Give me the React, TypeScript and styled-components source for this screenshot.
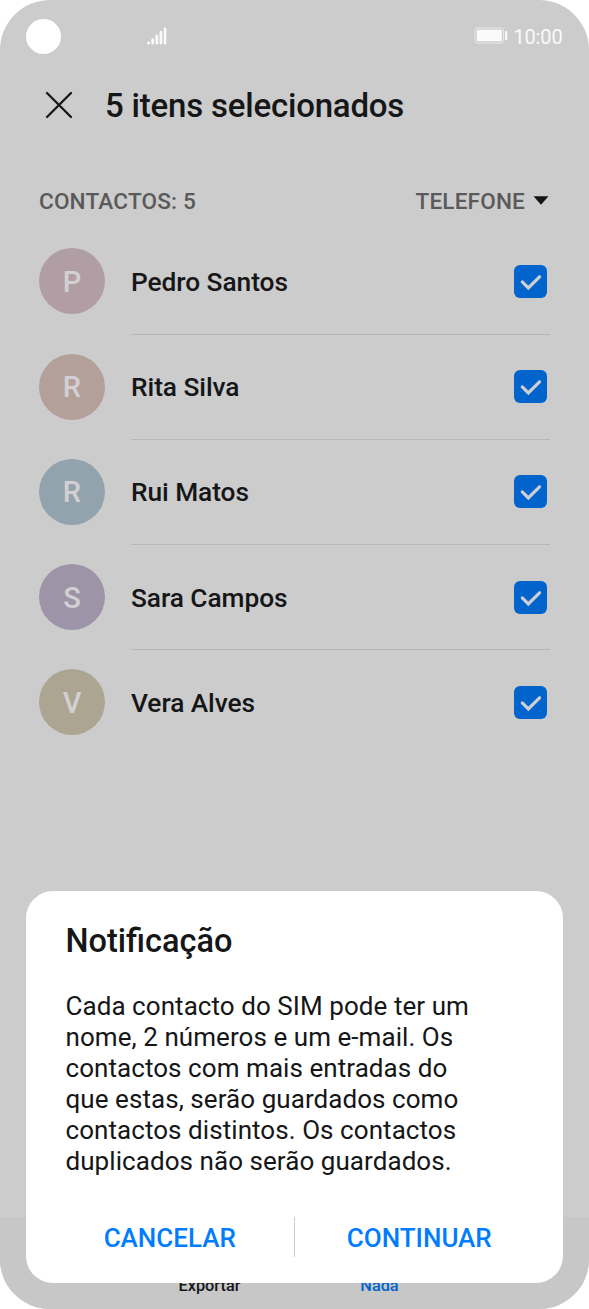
import React from 'react';
import styled, { createGlobalStyle } from 'styled-components';

const GlobalStyle = createGlobalStyle`
  * { box-sizing: border-box; }
  body {
    margin: 0;
    background: #fff;
    font-family: Roboto, "Liberation Sans", sans-serif;
  }
`;

const Phone = styled.div`
  position: relative;
  display: flex;
  flex-direction: column;
  width: 589px;
  height: 1309px;
  overflow: hidden;
  border-radius: 50px;
  background: #ccc;
  color: #151617;
`;

const StatusBar = styled.header`
  display: flex;
  align-items: center;
  height: 73px;
  padding: 0 26.5px 0 26px;
  color: #fafafa;
`;

const Camera = styled.span`
  width: 35px;
  height: 35px;
  border-radius: 50%;
  background: #fff;
`;

const Signal = styled.svg`
  width: 22px;
  height: 20px;
  margin: 0 auto 2px 85px;
`;

const Battery = styled.svg`
  width: 34px;
  height: 17px;
  margin-right: 5px;
  margin-bottom: 2px;
`;

const Clock = styled.time`
  font-size: 20px;
  line-height: 24px;
  letter-spacing: -0.15px;
`;

const TitleBar = styled.div`
  display: flex;
  align-items: center;
  gap: 31px;
  height: 66px;
  padding-left: 44px;
`;

const CloseIcon = styled.svg`
  width: 30px;
  height: 30px;
  margin-bottom: 2px;
`;

const Title = styled.h1`
  margin: 0;
  font-size: 33px;
  font-weight: 500;
  line-height: 40px;
  letter-spacing: -0.2px;
`;

const ListHeader = styled.div`
  display: flex;
  align-items: center;
  justify-content: space-between;
  height: 30px;
  margin-top: 48px;
  padding: 0 40px 0 39px;
  color: #5a5a5a;
  font-size: 22.6px;
  font-weight: 500;
  line-height: 30px;
  letter-spacing: 0.15px;
`;

const Source = styled.span`
  display: flex;
  align-items: center;
  gap: 8px;
`;

const Arrow = styled.svg`
  width: 16px;
  height: 9px;
  margin-bottom: 4px;
`;

const List = styled.ul`
  margin: 12.4px 0 0;
  padding: 0 39px;
  list-style: none;
`;

const Row = styled.li`
  display: flex;
  align-items: center;
  gap: 26px;
  height: 105.2px;
`;

const Avatar = styled.span<{ $color: string }>`
  display: flex;
  align-items: center;
  justify-content: center;
  width: 66px;
  height: 66px;
  margin-bottom: 1px;
  padding-top: 1px;
  border-radius: 50%;
  background: ${(p) => p.$color};
  color: #d2d0d2;
  font-size: 29px;
  font-weight: 500;
`;

const RowBody = styled.div<{ $last: boolean }>`
  display: flex;
  flex: 1;
  align-items: center;
  justify-content: space-between;
  height: 100%;
  padding-right: 3.5px;
  border-bottom: 1px solid ${(p) => (p.$last ? 'transparent' : '#b6b7b8')};
`;

const Name = styled.span`
  padding-top: 1px;
  font-size: 26.3px;
  font-weight: 500;
  line-height: 34px;
  letter-spacing: -0.06px;
`;

const Check = styled.svg`
  width: 33px;
  height: 33px;
`;

const BottomBar = styled.nav`
  display: flex;
  align-items: flex-end;
  height: 92px;
  margin-top: auto;
  padding: 0 124.5px 13px;
  background: #c7c7c7;
`;

const Action = styled.span<{ $active?: boolean }>`
  flex: 1;
  color: ${(p) => (p.$active ? '#0064cc' : '#151617')};
  font-size: 16.3px;
  font-weight: 500;
  line-height: 20px;
  text-align: center;
`;

const Dialog = styled.section`
  position: absolute;
  left: 26px;
  right: 26px;
  bottom: 26px;
  height: 392.5px;
  padding: 30px 39.5px 0;
  border-radius: 27px;
  background: #fff;
`;

const DialogTitle = styled.h2`
  margin: 0;
  font-size: 32.5px;
  font-weight: 500;
  line-height: 40px;
`;

const Message = styled.p`
  margin: 30px 0 0;
  font-size: 26px;
  line-height: 31.1px;
  letter-spacing: 0.06px;
  white-space: nowrap;
`;

const Buttons = styled.div`
  display: flex;
  align-items: center;
  margin: 40px -20px 0;
  height: 40px;
`;

const Button = styled.button`
  flex: 1;
  padding: 2px 0 0;
  border: 0;
  background: none;
  color: #007dff;
  font: 500 26px/40px Roboto, sans-serif;
`;

const Divider = styled.span`
  width: 1px;
  height: 40px;
  background: #ccc;
`;

const contacts = [
  { name: 'Pedro Santos', color: '#b09ea4' },
  { name: 'Rita Silva', color: '#b3a099' },
  { name: 'Rui Matos', color: '#93a3ae' },
  { name: 'Sara Campos', color: '#9d94a8' },
  { name: 'Vera Alves', color: '#aca592' },
];

const message = [
  'Cada contacto do SIM pode ter um',
  'nome, 2 números e um e-mail. Os',
  'contactos com mais entradas do',
  'que estas, serão guardados como',
  'contactos distintos. Os contactos',
  'duplicados não serão guardados.',
];

export default function App() {
  return (
    <>
      <GlobalStyle />
      <Phone>
        <StatusBar>
          <Camera />
          <Signal viewBox="0 0 22 20" stroke="currentColor" strokeWidth="2.7" strokeLinecap="round">
            <path d="M2.6 16.8v.4M6.7 13.6v3.6M10.8 9.9v7.3M14.9 6.2v11M19 2.9v14.3" />
          </Signal>
          <Battery viewBox="0 0 34 17" fill="none">
            <rect x="1" y="1" width="28.5" height="15" rx="2" stroke="#e9e9e9" />
            <rect x="2.8" y="2.8" width="25" height="11.4" rx="0.8" fill="currentColor" />
            <rect x="31" y="4" width="2.3" height="9" rx="1" fill="currentColor" />
          </Battery>
          <Clock>10:00</Clock>
        </StatusBar>
        <TitleBar>
          <CloseIcon viewBox="0 0 30 30" stroke="currentColor" strokeWidth="2.3" strokeLinecap="round">
            <path d="M3 3l24 24M27 3L3 27" />
          </CloseIcon>
          <Title>5 itens selecionados</Title>
        </TitleBar>
        <ListHeader>
          <span>CONTACTOS: 5</span>
          <Source>
            TELEFONE
            <Arrow viewBox="0 0 16 9">
              <path d="M.5 .3h15L8 8.8z" fill="#151617" />
            </Arrow>
          </Source>
        </ListHeader>
        <List>
          {contacts.map(({ name, color }, i) => (
            <Row key={name}>
              <Avatar $color={color}>{name[0]}</Avatar>
              <RowBody $last={i === contacts.length - 1}>
                <Name>{name}</Name>
                <Check viewBox="0 0 33 33" fill="none">
                  <rect width="33" height="33" rx="6" fill="#0064cc" />
                  <path d="M8.3 16.9l6 6L25.5 11.8" stroke="#ccd0d4" strokeWidth="3.2" strokeLinecap="round" />
                </Check>
              </RowBody>
            </Row>
          ))}
        </List>
        <BottomBar>
          <Action>Exportar</Action>
          <Action $active>Nada</Action>
        </BottomBar>
        <Dialog>
          <DialogTitle>Notificação</DialogTitle>
          <Message>
            {message.map((line) => (
              <React.Fragment key={line}>
                {line}
                <br />
              </React.Fragment>
            ))}
          </Message>
          <Buttons>
            <Button>CANCELAR</Button>
            <Divider />
            <Button>CONTINUAR</Button>
          </Buttons>
        </Dialog>
      </Phone>
    </>
  );
}
